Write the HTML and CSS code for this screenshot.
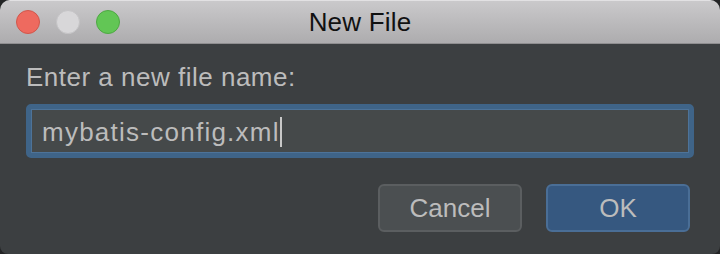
FILE: index.html
```html
<!DOCTYPE html>
<html lang="en">
<head>
    <meta charset="UTF-8">
    <title>New File</title>
    <link rel="stylesheet" href="styles.css">
</head>
<body>
    <div class="window">
        <div class="titlebar">
            <div class="lights">
                <span class="light close"></span>
                <span class="light minimize"></span>
                <span class="light zoom"></span>
            </div>
            <div class="title">New File</div>
            <div></div>
        </div>

        <div class="content">
            <div class="label">Enter a new file name:</div>
            <div class="field">
                <span class="value">mybatis-config.xml</span><span class="caret"></span>
            </div>
            <div class="actions">
                <button class="btn">Cancel</button>
                <button class="btn primary">OK</button>
            </div>
        </div>
    </div>
</body>
</html>
```

FILE: styles.css
```css
html, body {
    margin: 0;
    padding: 0;
    background: #232425;
}

body {
    font-family: "Liberation Sans", Arial, sans-serif;
    width: 720px;
    height: 254px;
    overflow: hidden;
}

.window {
    width: 720px;
    height: 254px;
    background: #3c3f41;
    border-radius: 10px 10px 8px 8px;
    overflow: hidden;
}

/* Barra de título */
.titlebar {
    height: 44px;
    box-sizing: border-box;
    display: grid;
    grid-template-columns: 1fr auto 1fr;
    align-items: center;
    background: linear-gradient(#cac9cb, #adacae);
    border-top: 1px solid #e2e1e3;
    border-bottom: 1px solid #8f8e90;
}

.lights {
    display: flex;
    gap: 16px;
    padding-left: 16px;
}

.light {
    width: 22px;
    height: 22px;
    border-radius: 50%;
    border: 1px solid transparent;
}

.light.close {
    background: #ee6a5f;
    border-color: #d1574c;
}

.light.minimize {
    background: #d8d7d9;
    border-color: #c4c3c5;
}

.light.zoom {
    background: #62c655;
    border-color: #4ea843;
}

.title {
    font-size: 26px;
    color: #111111;
    line-height: 30px;
    letter-spacing: 0.2px;
}

/* Corpo do diálogo */
.content {
    padding: 18px 26px 0 26px;
}

.label {
    font-size: 26px;
    line-height: 30px;
    color: #bcbcbc;
    letter-spacing: 0.5px;
}

.field {
    margin-top: 12px;
    width: 668px;
    height: 54px;
    box-sizing: border-box;
    border: 5px solid #3f6488;
    border-radius: 5px;
    background: #45494a;
    box-shadow: inset 0 0 0 1px #4d7399;
    padding: 1px 11px 0 11px;
    display: flex;
    align-items: center;
    font-size: 26px;
    line-height: 42px;
    color: #bcbcbc;
}

.value {
    letter-spacing: 1.25px;
}

.caret {
    display: inline-block;
    width: 2px;
    height: 30px;
    background: #c8c8c8;
}

.actions {
    display: flex;
    justify-content: flex-end;
    gap: 24px;
    margin-top: 26px;
    padding-right: 4px;
}

.btn {
    width: 144px;
    height: 48px;
    box-sizing: border-box;
    border: 2px solid #5b5e60;
    border-radius: 6px;
    background: #4b4f51;
    color: #bcbcbc;
    font-family: "Liberation Sans", Arial, sans-serif;
    font-size: 26px;
    line-height: 44px;
    padding: 0;
}

.btn.primary {
    background: #365880;
    border-color: #4a6e96;
}
```
